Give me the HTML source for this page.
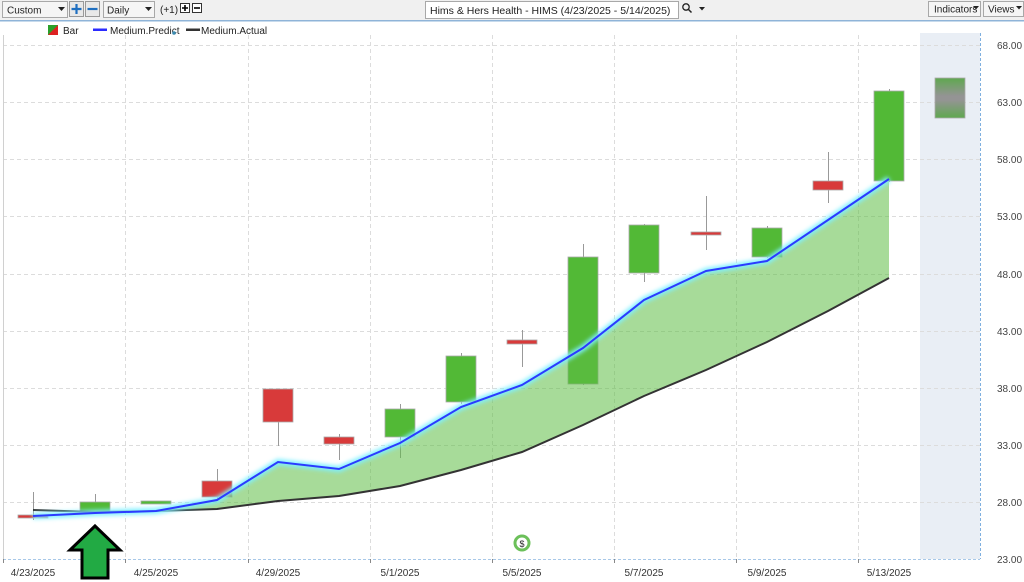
<!DOCTYPE html>
<html><head><meta charset="utf-8"><style>
html,body{margin:0;padding:0;width:1024px;height:582px;overflow:hidden;background:#fff;font-family:"Liberation Sans",sans-serif;}
svg text{font-family:"Liberation Sans",sans-serif;}
</style></head><body>
<svg width="1024" height="582" viewBox="0 0 1024 582" xmlns="http://www.w3.org/2000/svg">
<defs>
<linearGradient id="fc" x1="0" y1="0" x2="0" y2="1">
<stop offset="0" stop-color="#5fa84f"/><stop offset="0.45" stop-color="#949494"/><stop offset="0.55" stop-color="#949494"/><stop offset="1" stop-color="#5fa84f"/></linearGradient>
<filter id="gl"><feGaussianBlur stdDeviation="2"/></filter>
</defs>
<!-- toolbar -->
<rect x="0" y="0" width="1024" height="20" fill="#f0f0f0"/>
<rect x="0" y="20" width="1024" height="1.5" fill="#8fb4d8"/>
<rect x="2.5" y="1.5" width="65" height="16" fill="#f5f5f5" stroke="#a8a8a8"/>
<text x="7" y="13.5" font-size="10" fill="#222">Custom</text>
<path d="M58 7h7l-3.5 4z" fill="#222"/>
<rect x="69.5" y="1.5" width="14" height="15" fill="#e8e8e8" stroke="#999"/>
<path d="M76.5 4v10M71.5 9h10" stroke="#1f6fc0" stroke-width="2.2"/>
<rect x="85.5" y="1.5" width="14" height="15" fill="#e8e8e8" stroke="#999"/>
<path d="M87.5 9h10" stroke="#1f6fc0" stroke-width="2.2"/>
<rect x="103.5" y="1.5" width="51" height="16" fill="#f5f5f5" stroke="#a8a8a8"/>
<text x="107" y="13.5" font-size="10" fill="#222">Daily</text>
<path d="M145 7h7l-3.5 4z" fill="#222"/>
<text x="160" y="13" font-size="10" fill="#222">(+1)</text>
<rect x="180.5" y="3.5" width="9" height="9" fill="#fff" stroke="#333"/>
<path d="M185 5v6M182 8h6" stroke="#000" stroke-width="1.6"/>
<rect x="192.5" y="3.5" width="9" height="9" fill="#fff" stroke="#333"/>
<path d="M194 8h6" stroke="#000" stroke-width="1.6"/>
<rect x="425.5" y="1.5" width="253" height="17" fill="#fff" stroke="#a8a8a8"/>
<text x="430" y="14" font-size="10.5" fill="#222">Hims &amp; Hers Health - HIMS (4/23/2025 - 5/14/2025)</text>
<circle cx="686" cy="7" r="3.2" fill="none" stroke="#222" stroke-width="1.3"/>
<path d="M688.5 9.5l3 3" stroke="#222" stroke-width="1.5"/>
<path d="M699 7h6l-3 3.5z" fill="#222"/>
<rect x="928.5" y="1.5" width="52" height="15" fill="#f5f5f5" stroke="#a8a8a8"/>
<text x="934" y="12.5" font-size="10" fill="#222">Indicators</text>
<path d="M973 6h6l-3 3.5z" fill="#222"/>
<rect x="983.5" y="1.5" width="40" height="15" fill="#f5f5f5" stroke="#a8a8a8"/>
<text x="988" y="12.5" font-size="10" fill="#222">Views</text>
<path d="M1016 6h6l-3 3.5z" fill="#222"/>
<!-- legend -->
<path d="M48 25h10v10H48z" fill="#2aa02a"/><path d="M58 25v10H48z" fill="#dd2222"/>
<text x="63" y="34" font-size="10" fill="#222">Bar</text>
<rect x="93" y="28.5" width="14" height="2.5" fill="#2b2bff"/>
<text x="110" y="34" font-size="10" fill="#222">Medium.Predict</text>
<circle cx="174" cy="33" r="1.8" fill="#3a8ab0"/>
<rect x="186" y="28.5" width="14" height="2.5" fill="#333"/>
<text x="201" y="34" font-size="10" fill="#222">Medium.Actual</text>
<!-- forecast region -->
<rect x="920" y="33" width="60" height="526" fill="#e9eef5"/>
<line x1="980.5" y1="33" x2="980.5" y2="559" stroke="#7fb0e0" stroke-dasharray="3,2"/>
<!-- grid -->
<g stroke="#dcdcdc" stroke-dasharray="4,3">
<line x1="3" y1="45.5" x2="980" y2="45.5"/><line x1="3" y1="102.5" x2="980" y2="102.5"/><line x1="3" y1="159.5" x2="980" y2="159.5"/><line x1="3" y1="216.5" x2="980" y2="216.5"/><line x1="3" y1="274.5" x2="980" y2="274.5"/><line x1="3" y1="331.5" x2="980" y2="331.5"/><line x1="3" y1="388.5" x2="980" y2="388.5"/><line x1="3" y1="445.5" x2="980" y2="445.5"/><line x1="3" y1="502.5" x2="980" y2="502.5"/>
<line x1="125.5" y1="35" x2="125.5" y2="559"/><line x1="248.5" y1="35" x2="248.5" y2="559"/><line x1="370.5" y1="35" x2="370.5" y2="559"/><line x1="492.5" y1="35" x2="492.5" y2="559"/><line x1="614.5" y1="35" x2="614.5" y2="559"/><line x1="736.5" y1="35" x2="736.5" y2="559"/><line x1="858.5" y1="35" x2="858.5" y2="559"/>
</g>
<line x1="3.5" y1="35" x2="3.5" y2="559" stroke="#d0d0d0"/>
<line x1="3" y1="559.5" x2="980" y2="559.5" stroke="#a8c8e8" stroke-dasharray="3,2"/>
<g stroke="#888"><line x1="3.5" y1="559" x2="3.5" y2="563"/><line x1="125.5" y1="559" x2="125.5" y2="563"/><line x1="248.5" y1="559" x2="248.5" y2="563"/><line x1="370.5" y1="559" x2="370.5" y2="563"/><line x1="492.5" y1="559" x2="492.5" y2="563"/><line x1="614.5" y1="559" x2="614.5" y2="563"/><line x1="736.5" y1="559" x2="736.5" y2="563"/><line x1="858.5" y1="559" x2="858.5" y2="563"/></g>
<!-- y labels -->
<g font-size="10" fill="#444">
<text x="997" y="49">68.00</text><text x="997" y="106">63.00</text><text x="997" y="163">58.00</text><text x="997" y="220">53.00</text><text x="997" y="278">48.00</text><text x="997" y="335">43.00</text><text x="997" y="392">38.00</text><text x="997" y="449">33.00</text><text x="997" y="506">28.00</text><text x="997" y="563">23.00</text>
</g>
<g font-size="10" fill="#333" text-anchor="middle">
<text x="33" y="576">4/23/2025</text><text x="156" y="576">4/25/2025</text><text x="278" y="576">4/29/2025</text><text x="400" y="576">5/1/2025</text><text x="522" y="576">5/5/2025</text><text x="644" y="576">5/7/2025</text><text x="767" y="576">5/9/2025</text><text x="889" y="576">5/13/2025</text>
</g>
<!-- wicks -->
<g stroke="#999" stroke-width="1">
<line x1="33.5" y1="492" x2="33.5" y2="520"/><line x1="95.5" y1="494" x2="95.5" y2="513"/><line x1="217.5" y1="469" x2="217.5" y2="500"/><line x1="278.5" y1="389" x2="278.5" y2="446"/><line x1="339.5" y1="434" x2="339.5" y2="460"/><line x1="400.5" y1="404" x2="400.5" y2="458"/><line x1="461.5" y1="353" x2="461.5" y2="404"/><line x1="522.5" y1="330" x2="522.5" y2="367"/><line x1="583.5" y1="244" x2="583.5" y2="385"/><line x1="644.5" y1="224" x2="644.5" y2="282"/><line x1="706.5" y1="196" x2="706.5" y2="250"/><line x1="767.5" y1="226" x2="767.5" y2="258"/><line x1="828.5" y1="152" x2="828.5" y2="203"/><line x1="889.5" y1="89" x2="889.5" y2="182"/>
</g>
<!-- bodies -->
<g stroke="#aaa" stroke-width="0.8">
<rect x="18" y="515" width="30" height="3" fill="#d83a3a"/>
<rect x="80" y="502" width="30" height="10" fill="#52b936"/>
<rect x="141" y="501" width="30" height="3" fill="#52b936"/>
<rect x="202" y="481" width="30" height="16" fill="#d83a3a"/>
<rect x="263" y="389" width="30" height="33" fill="#d83a3a"/>
<rect x="324" y="437" width="30" height="7" fill="#d83a3a"/>
<rect x="385" y="409" width="30" height="28" fill="#52b936"/>
<rect x="446" y="356" width="30" height="46" fill="#52b936"/>
<rect x="507" y="340" width="30" height="4" fill="#d83a3a"/>
<rect x="568" y="257" width="30" height="127" fill="#52b936"/>
<rect x="629" y="225" width="30" height="48" fill="#52b936"/>
<rect x="691" y="232" width="30" height="3" fill="#d83a3a"/>
<rect x="752" y="228" width="30" height="29" fill="#52b936"/>
<rect x="813" y="181" width="30" height="9" fill="#d83a3a"/>
<rect x="874" y="91" width="30" height="90" fill="#52b936"/>
<rect x="935" y="78" width="30" height="40" fill="url(#fc)"/>
</g>
<!-- fill between -->
<polygon points="156,511 217,500 278,462 339,469 400,443 461,407 522,385 583,348 644,300 706,271 767,261 828,220 889,179 889,278 828,311 767,342 706,370 644,396 583,425 522,452 461,470 400,486 339,496 278,501 217,509 156,511" fill="rgba(95,190,70,0.55)"/>
<!-- lines -->
<polyline points="33,510 95,512 156,511 217,509 278,501 339,496 400,486 461,470 522,452 583,425 644,396 706,370 767,342 828,311 889,278" fill="none" stroke="#333" stroke-width="2"/>
<polyline points="33,516 95,513 156,511 217,500 278,462 339,469 400,443 461,407 522,385 583,348 644,300 706,271 767,261 828,220 889,179" fill="none" stroke="#7ff0ff" stroke-width="6" filter="url(#gl)"/>
<polyline points="33,516 95,513 156,511 217,500 278,462 339,469 400,443 461,407 522,385 583,348 644,300 706,271 767,261 828,220 889,179" fill="none" stroke="#2b3bff" stroke-width="2"/>
<!-- dollar icon -->
<circle cx="522" cy="543" r="7" fill="#fff" stroke="#6cc05a" stroke-width="3"/>
<text x="522" y="547" font-size="9" text-anchor="middle" fill="#222">$</text>
<!-- arrow -->
<polygon points="95,526 120,550 108,550 108,578 82,578 82,550 70,550" fill="#22aa44" stroke="#000" stroke-width="3" stroke-linejoin="miter"/>
</svg>
</body></html>
